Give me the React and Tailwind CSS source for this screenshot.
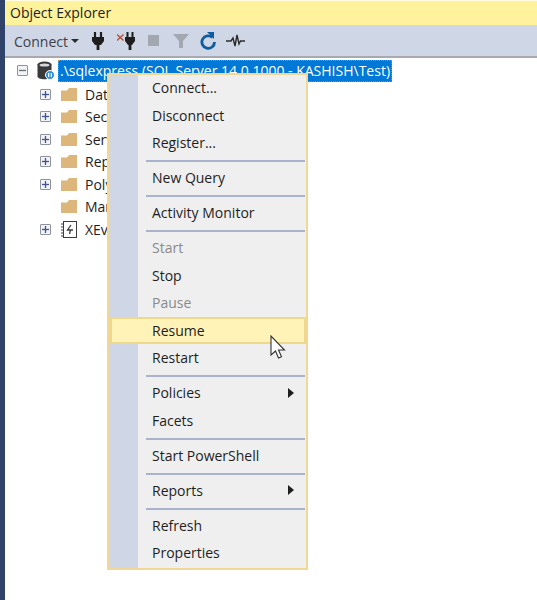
import React from 'react';

const FONT = "font-['Open_Sans','Noto_Sans',sans-serif]";

const MENU = [
  { label: 'Connect...' },
  { label: 'Disconnect' },
  { label: 'Register...' },
  { sep: true },
  { label: 'New Query' },
  { sep: true },
  { label: 'Activity Monitor' },
  { sep: true },
  { label: 'Start', disabled: true },
  { label: 'Stop' },
  { label: 'Pause', disabled: true },
  { label: 'Resume', active: true },
  { label: 'Restart' },
  { sep: true },
  { label: 'Policies', arrow: true },
  { label: 'Facets' },
  { sep: true },
  { label: 'Start PowerShell' },
  { sep: true },
  { label: 'Reports', arrow: true },
  { sep: true },
  { label: 'Refresh' },
  { label: 'Properties' },
];

// labels run on under the context menu, only the start of each one shows
const TREE = [
  { label: 'Databases', icon: 'folder', box: true },
  { label: 'Security', icon: 'folder', box: true },
  { label: 'Server Objects', icon: 'folder', box: true },
  { label: 'Replication', icon: 'folder', box: true },
  { label: 'PolyBase', icon: 'folder', box: true },
  { label: 'Management', icon: 'folder' },
  { label: 'XEvent Profiler', icon: 'xe', box: true },
];

function Plug() {
  return (
    <svg width="12" height="18" viewBox="0 0 12 18">
      <path d="M3 0v5M9 0v5" stroke="#1e1e1e" strokeWidth="2.200" />
      <path d="M0 5h12v4l-3 4H3L0 9z" fill="#1e1e1e" />
      <path d="M6 13v5" stroke="#1e1e1e" strokeWidth="2.800" />
    </svg>
  );
}

function PlugOff() {
  return (
    <svg width="18" height="18" viewBox="0 0 18 18">
      <path d="M0 2.500l6.500 6M6.500 2.500l-6.500 6" stroke="#b5543a" strokeWidth="1.500" />
      <path d="M10.500 0v5M15.500 0v5" stroke="#1e1e1e" strokeWidth="2" />
      <path d="M8 5h10v4l-3 4h-4L8 9z" fill="#1e1e1e" />
      <path d="M13 13v5" stroke="#1e1e1e" strokeWidth="2.800" />
    </svg>
  );
}

function Expander({ minus }) {
  return (
    <span className="flex h-[11px] w-[11px] items-center justify-center rounded-[1px] border border-[#8f939b] bg-[#f2f3f6]">
      <svg width="7" height="7" viewBox="0 0 7 7">
        <path d="M0 3.500h7" stroke={minus ? '#6b6f78' : '#41558f'} strokeWidth="1.300" />
        {!minus && <path d="M3.500 0v7" stroke="#41558f" strokeWidth="1.300" />}
      </svg>
    </span>
  );
}

function Folder() {
  return (
    <svg width="18" height="15" viewBox="0 0 18 15">
      <path d="M1 3.500V14h16V1H9L7 3.500z" fill="#dcb67a" />
    </svg>
  );
}

function XEventIcon() {
  return (
    <svg width="16" height="17" viewBox="0 0 16 17">
      <rect x="2.500" y="0.500" width="13" height="16" fill="#fff" stroke="#3c3c3c" />
      <path d="M0 3h3M0 6h3M0 9h3M0 12h3M0 15h3" stroke="#3c3c3c" />
      <path d="M10 4L6.500 9h3l-1 4M9.500 9H12" stroke="#3c3c3c" strokeWidth="1.300" fill="none" />
    </svg>
  );
}

function ServerIcon() {
  return (
    <svg width="18" height="19" viewBox="0 0 18 19">
      <path d="M0.500 3.500v12c0 1.500 3 2.800 7 2.800s7-1.300 7-2.800v-12z" fill="#3a3a3a" />
      <ellipse cx="7.500" cy="3.500" rx="7" ry="3" fill="#3a3a3a" />
      <ellipse cx="7.500" cy="4" rx="5" ry="1.600" fill="#d8d8d8" />
      <circle cx="13" cy="14" r="4.500" fill="#2f8fd8" stroke="#fff" />
      <path d="M11.700 12v4M14.300 12v4" stroke="#fff" strokeWidth="1.200" />
    </svg>
  );
}

function MenuItem({ item }) {
  if (item.sep) {
    return (
      <div className="flex h-[7.5px] items-center pl-[37px] pr-[1px]">
        <div className="h-[2px] w-full bg-[#a9b4cc]" />
      </div>
    );
  }
  if (item.active) {
    return (
      <div className="ml-[1px] flex h-[27.5px] -translate-y-px items-center border-2 border-[#f0d78a] bg-[#fff3b8] pl-[40px] pr-3 text-[14px] text-[#1e1e1e]">
        {item.label}
      </div>
    );
  }
  return (
    <div className={`flex h-[27.5px] items-center pb-[2px] pl-[43px] pr-3 text-[14px] ${item.disabled ? 'text-[#8a8a8a]' : 'text-[#1e1e1e]'}`}>
      <span className="flex-1">{item.label}</span>
      {item.arrow && (
        <span className="h-0 w-0 border-y-[5px] border-l-[6px] border-y-transparent border-l-[#1e1e1e]" />
      )}
    </div>
  );
}

export default function App() {
  return (
    <div className={`relative flex h-[600px] w-[537px] flex-col overflow-hidden border-l-[5px] border-[#2f4468] bg-white ${FONT}`}>
      <div className="flex h-[25px] shrink-0 items-center border-t border-[#fffbe0] bg-[#fff29d] pb-[2px] pl-[5px] text-[14px] text-[#1e1e1e]">
        Object Explorer
      </div>
      <div className="flex h-[33px] shrink-0 items-center border-b-2 border-[#a7a9af] bg-[#cfd6e5] pl-[9px]">
        <span className="pt-[1px] text-[14px] text-[#3d4048]">Connect</span>
        <span className="ml-[3px] h-0 w-0 border-x-[4px] border-t-[4px] border-x-transparent border-t-[#2c2c2c]" />
        <div className="ml-[13px]"><Plug /></div>
        <div className="ml-[13px]"><PlugOff /></div>
        <span className="ml-[13px] h-[11px] w-[11px] bg-[#a3a7b0]" />
        <svg className="ml-[14px]" width="16" height="16" viewBox="0 0 16 16">
          <path d="M0 1h16L10 8v7H6V8z" fill="#a3a7b0" />
        </svg>
        <svg className="ml-[11px]" width="16" height="18" viewBox="0 0 16 18">
          <path d="M12.500 5.500A6.300 6.300 0 1 0 14.500 10" fill="none" stroke="#0f5c9e" strokeWidth="2.800" />
          <path d="M7 0l7 0v7z" fill="#0f5c9e" />
        </svg>
        <svg className="ml-[10px]" width="19" height="15" viewBox="0 0 19 15">
          <path d="M0 8h5l2-3 2 8 2-11 2 9 1.500-3H19" fill="none" stroke="#2c2c2c" strokeWidth="1.400" />
        </svg>
      </div>

      <div className="flex flex-col pl-[12px] pt-[1px]">
        <div className="mb-[1px] flex h-[23px] items-center">
          <Expander minus />
          <span className="ml-[9px] flex w-[18px] justify-center">
            <ServerIcon />
          </span>
          <span className="ml-[3px] flex h-[22px] items-center whitespace-nowrap border border-dotted border-[#c8822e] bg-[#0078d7] px-[1px] text-[14px] text-white">
            .\sqlexpress (SQL Server 14.0.1000 - KASHISH\Test)
          </span>
        </div>
        {TREE.map((t) => (
          <div key={t.label} className="flex h-[22.5px] w-[90px] items-center overflow-hidden whitespace-nowrap pl-[23px] text-[14px] text-[#1e1e1e]">
            <span className="w-[11px] shrink-0">{t.box && <Expander />}</span>
            <span className="ml-[9px] flex w-[18px] shrink-0 justify-center">
              {t.icon === 'folder' ? <Folder /> : <XEventIcon />}
            </span>
            <span className="ml-[7px]">{t.label}</span>
          </div>
        ))}
      </div>

      <div className="absolute left-[102px] top-[73px] h-[497px] w-[201px] border-2 border-[#f2d896] bg-[#efefef]">
        <div className="absolute bottom-0 left-0 top-0 w-[29px] bg-[#cfd6e5]" />
        <div className="relative">
          {MENU.map((item, i) => (
            <MenuItem key={i} item={item} />
          ))}
        </div>
      </div>

      <svg className="absolute left-[265px] top-[335px]" width="18" height="26" viewBox="0 0 18 26">
        <path d="M1 1v19l4.500-4 3 7 3-1.300-3-6.700h6z" fill="#fff" stroke="#333" strokeWidth="1.100" />
      </svg>
    </div>
  );
}
